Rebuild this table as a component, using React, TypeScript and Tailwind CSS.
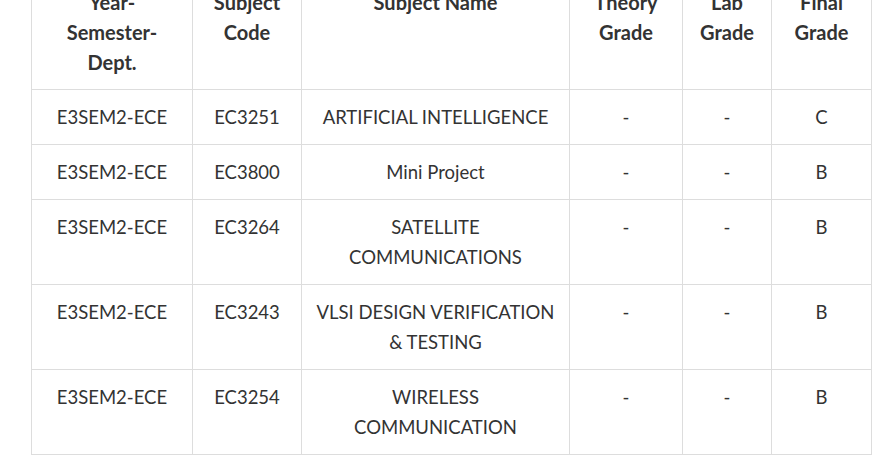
import React from 'react';

interface GradeRow {
  dept: string;
  code: string;
  name: React.ReactNode;
  theory: string;
  lab: string;
  final: string;
}

const rows: GradeRow[] = [
  { dept: 'E3SEM2-ECE', code: 'EC3251', name: 'ARTIFICIAL INTELLIGENCE', theory: '-', lab: '-', final: 'C' },
  { dept: 'E3SEM2-ECE', code: 'EC3800', name: 'Mini Project', theory: '-', lab: '-', final: 'B' },
  { dept: 'E3SEM2-ECE', code: 'EC3264', name: <>SATELLITE<br />COMMUNICATIONS</>, theory: '-', lab: '-', final: 'B' },
  { dept: 'E3SEM2-ECE', code: 'EC3243', name: <>VLSI DESIGN VERIFICATION<br />&amp; TESTING</>, theory: '-', lab: '-', final: 'B' },
  { dept: 'E3SEM2-ECE', code: 'EC3254', name: <>WIRELESS<br />COMMUNICATION</>, theory: '-', lab: '-', final: 'B' },
];

const th = 'border border-[#dddddd] px-3 py-3 align-top text-center text-[20px] font-bold';
const td = 'border border-[#dddddd] px-2 py-3 align-top text-center text-[18.5px] font-normal whitespace-nowrap';

export default function App() {
  return (
    <div className="h-[461px] w-[893px] overflow-hidden bg-white">
      <table
        className="ml-[31px] -mt-[26px] w-[840px] table-fixed border-collapse leading-[30px] text-[#333333]"
        style={{ fontFamily: 'Lato, "Noto Sans", sans-serif' }}
      >
        <colgroup>
          <col className="w-[161px]" />
          <col className="w-[109px]" />
          <col className="w-[268px]" />
          <col className="w-[113px]" />
          <col className="w-[89px]" />
          <col className="w-[100px]" />
        </colgroup>
        <thead>
          <tr>
            <th className={th}>Year-<br />Semester-<br />Dept.</th>
            <th className={th}>Subject<br />Code</th>
            <th className={th}>Subject Name</th>
            <th className={th}>Theory<br />Grade</th>
            <th className={th}>Lab<br />Grade</th>
            <th className={th}>Final<br />Grade</th>
          </tr>
        </thead>
        <tbody>
          {rows.map(row => (
            <tr key={row.code}>
              <td className={td}>{row.dept}</td>
              <td className={td}>{row.code}</td>
              <td className={td}>{row.name}</td>
              <td className={td}>{row.theory}</td>
              <td className={td}>{row.lab}</td>
              <td className={td}>{row.final}</td>
            </tr>
          ))}
        </tbody>
      </table>
    </div>
  );
}
